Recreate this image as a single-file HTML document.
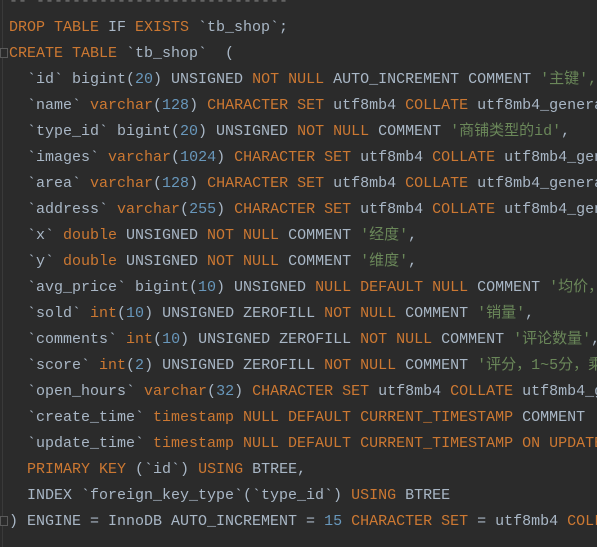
<!DOCTYPE html>
<html><head><meta charset="utf-8"><style>
html,body{margin:0;padding:0;background:#2b2b2b;width:597px;height:547px;overflow:hidden}
.w{position:absolute;left:0;top:0;width:597px;height:547px;overflow:hidden}
.c{position:absolute;left:9px;top:-11px;font-family:"Liberation Mono","Noto Sans CJK SC",monospace;font-size:15px;line-height:26px;color:#a9b7c6;white-space:pre}
.k{color:#cc7832}.n{color:#6897bb}.s{color:#6a8759}.g{color:#808080}
.gut{position:absolute;left:2px;top:0;width:1px;height:547px;background:#3a3a3a}
.f{position:absolute;left:0;width:6px;height:8px;border:1px solid #5a5a5a;background:#2b2b2b}
</style></head><body><div class="w">
<div class="gut"></div>
<div class="f" style="top:48px"></div>
<div class="f" style="top:516px"></div>
<div class="c"><span class="g">-- ----------------------------</span>
<span class="k">DROP TABLE</span> IF <span class="k">EXISTS</span> `tb_shop`;
<span class="k">CREATE TABLE</span> `tb_shop`  (
  `id` bigint(<span class="n">20</span>) UNSIGNED <span class="k">NOT NULL</span> AUTO_INCREMENT COMMENT <span class="s">'主键',</span>
  `name` <span class="k">varchar</span>(<span class="n">128</span>) <span class="k">CHARACTER SET</span> utf8mb4 <span class="k">COLLATE</span> utf8mb4_general_ci
  `type_id` bigint(<span class="n">20</span>) UNSIGNED <span class="k">NOT NULL</span> COMMENT <span class="s">'商铺类型的id'</span>,
  `images` <span class="k">varchar</span>(<span class="n">1024</span>) <span class="k">CHARACTER SET</span> utf8mb4 <span class="k">COLLATE</span> utf8mb4_general
  `area` <span class="k">varchar</span>(<span class="n">128</span>) <span class="k">CHARACTER SET</span> utf8mb4 <span class="k">COLLATE</span> utf8mb4_general_ci
  `address` <span class="k">varchar</span>(<span class="n">255</span>) <span class="k">CHARACTER SET</span> utf8mb4 <span class="k">COLLATE</span> utf8mb4_general
  `x` <span class="k">double</span> UNSIGNED <span class="k">NOT NULL</span> COMMENT <span class="s">'经度'</span>,
  `y` <span class="k">double</span> UNSIGNED <span class="k">NOT NULL</span> COMMENT <span class="s">'维度'</span>,
  `avg_price` bigint(<span class="n">10</span>) UNSIGNED <span class="k">NULL DEFAULT NULL</span> COMMENT <span class="s">'均价，取整数'</span>
  `sold` <span class="k">int</span>(<span class="n">10</span>) UNSIGNED ZEROFILL <span class="k">NOT NULL</span> COMMENT <span class="s">'销量'</span>,
  `comments` <span class="k">int</span>(<span class="n">10</span>) UNSIGNED ZEROFILL <span class="k">NOT NULL</span> COMMENT <span class="s">'评论数量'</span>,
  `score` <span class="k">int</span>(<span class="n">2</span>) UNSIGNED ZEROFILL <span class="k">NOT NULL</span> COMMENT <span class="s">'评分，1~5分，乘10保存'</span>
  `open_hours` <span class="k">varchar</span>(<span class="n">32</span>) <span class="k">CHARACTER SET</span> utf8mb4 <span class="k">COLLATE</span> utf8mb4_general
  `create_time` <span class="k">timestamp NULL DEFAULT CURRENT_TIMESTAMP</span> COMMENT <span class="s">'创建时间'</span>
  `update_time` <span class="k">timestamp NULL DEFAULT CURRENT_TIMESTAMP</span> <span class="k">ON UPDATE</span> CURRENT
  <span class="k">PRIMARY KEY</span> (`id`) <span class="k">USING</span> BTREE,
  INDEX `foreign_key_type`(`type_id`) <span class="k">USING</span> BTREE
) ENGINE = InnoDB AUTO_INCREMENT = <span class="n">15</span> <span class="k">CHARACTER SET</span> = utf8mb4 <span class="k">COLLATE</span> = utf8mb4</div>
</div></body></html>
